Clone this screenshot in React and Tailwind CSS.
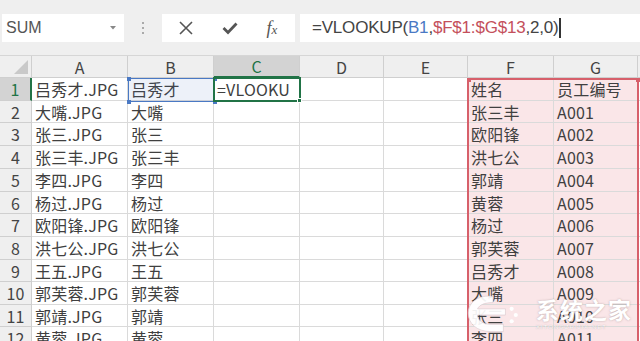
import React from "react";

const cols = ["A", "B", "C", "D", "E", "F", "G"];
const colW = ["w-[96px]", "w-[86px]", "w-[86px]", "w-[84px]", "w-[84px]", "w-[86px]", "w-[84px]"];
const rowH = ["h-[23px]", "h-[22px]", "h-[23px]", "h-[23px]", "h-[23px]", "h-[22px]", "h-[23px]", "h-[23px]", "h-[22px]", "h-[23px]", "h-[22px]", "h-[23px]"];

const A = ["吕秀才.JPG", "大嘴.JPG", "张三.JPG", "张三丰.JPG", "李四.JPG", "杨过.JPG", "欧阳锋.JPG", "洪七公.JPG", "王五.JPG", "郭芙蓉.JPG", "郭靖.JPG", "黄蓉.JPG"];
const B = ["吕秀才", "大嘴", "张三", "张三丰", "李四", "杨过", "欧阳锋", "洪七公", "王五", "郭芙蓉", "郭靖", "黄蓉"];
const F = ["姓名", "张三丰", "欧阳锋", "洪七公", "郭靖", "黄蓉", "杨过", "郭芙蓉", "吕秀才", "大嘴", "张三", "李四"];
const G = ["员工编号", "A001", "A002", "A003", "A004", "A005", "A006", "A007", "A008", "A009", "A010", "A011"];

const font = "font-['Noto_Sans_CJK_SC','Noto_Sans',sans-serif]";

function Cell({ w, h, text, pink }) {
  return (
    <div
      className={`${w} ${h} shrink-0 border-r border-b border-[#dadada] ${pink ? "bg-[#fae6e8]" : "bg-white"} flex items-center pl-[3px] text-[16px] leading-none text-[#404040] whitespace-nowrap overflow-hidden tracking-[0.2px]`}
    >
      {text}
    </div>
  );
}

export default function App() {
  return (
    <div className={`w-[640px] h-[341px] overflow-hidden bg-white relative ${font}`}>
      {/* Formula bar */}
      <div className="h-[56px] bg-[#efefef] flex items-start pt-[14px] pl-[2px] border-b border-[#d6d6d6]">
        <div className="w-[122px] h-[28px] bg-white flex items-center pl-[4px] pr-[8px] justify-between">
          <span className="text-[16px] text-[#555] font-['Liberation_Sans',sans-serif]">SUM</span>
          <svg width="6" height="4" viewBox="0 0 6 4"><path d="M0 0 L6 0 L3 3.5 Z" fill="#888" /></svg>
        </div>
        <div className="w-[38px] h-[28px] flex flex-col items-center justify-center gap-[3px]">
          <div className="w-[2px] h-[2px] bg-[#aaa]" />
          <div className="w-[2px] h-[2px] bg-[#aaa]" />
          <div className="w-[2px] h-[2px] bg-[#aaa]" />
        </div>
        <div className="w-[133px] h-[28px] bg-white flex items-center">
          <div className="w-[46px] flex justify-center pl-[2px]">
            <svg width="14" height="14" viewBox="0 0 14 14"><path d="M1 1 L13 13 M13 1 L1 13" stroke="#555" strokeWidth="1.6" /></svg>
          </div>
          <div className="w-[44px] flex justify-center">
            <svg width="16" height="14" viewBox="0 0 16 14"><path d="M1.5 7 L6 11.5 L14.5 2.5" stroke="#555" strokeWidth="2.8" fill="none" /></svg>
          </div>
          <div className="w-[40px] flex justify-center">
            <span className="font-['Liberation_Serif',serif] italic text-[18px] text-[#555] leading-none">f<span className="text-[13px]">x</span></span>
          </div>
        </div>
        <div className="w-[5px]" />
        <div className="flex-1 h-[28px] bg-white flex items-center pl-[12px] text-[17px] text-[#444] font-['Liberation_Sans',sans-serif] whitespace-nowrap tracking-[-0.2px]">
          <span>=VLOOKUP(</span>
          <span className="text-[#4a79c4]">B1</span>
          <span>,</span>
          <span className="text-[#c4505c]">$F$1:$G$13</span>
          <span>,2,0)</span>
          <span className="w-[1.5px] h-[20px] bg-[#333] ml-[1px]" />
        </div>
      </div>

      {/* Grid */}
      <div className="relative">
        <div className="flex h-[22px]">
          <div className="w-[32px] shrink-0 bg-[#efefef] border-r border-b border-[#cfcfcf] flex items-end justify-end p-[3px]">
            <svg width="14" height="14" viewBox="0 0 14 14"><path d="M14 0 L14 14 L0 14 Z" fill="#c9c9c9" /></svg>
          </div>
          {cols.map((c, i) => (
            <div
              key={c}
              className={`${colW[i]} shrink-0 border-r border-[#cfcfcf] flex items-center justify-center text-[16px] leading-none ${c === "C" ? "bg-[#d3d3d3] text-[#217346] border-b-2 border-b-[#217346]" : "bg-[#efefef] text-[#444] border-b border-b-[#cfcfcf]"}`}
            >
              {c}
            </div>
          ))}
          <div className="flex-1 bg-[#efefef] border-b border-[#cfcfcf]" />
        </div>
        {rowH.map((h, r) => (
          <div key={r} className="flex">
            <div
              className={`w-[32px] ${h} shrink-0 border-r border-b border-[#cfcfcf] flex items-center justify-center text-[16px] leading-none ${r === 0 ? "bg-[#d3d3d3] text-[#217346] border-r-2 border-r-[#217346]" : "bg-[#efefef] text-[#444]"}`}
            >
              {r + 1}
            </div>
            <Cell w={colW[0]} h={h} text={A[r]} />
            <Cell w={colW[1]} h={h} text={B[r]} />
            <Cell w={colW[2]} h={h} text={r === 0 ? "=VLOOKU" : ""} />
            <Cell w={colW[3]} h={h} text="" />
            <Cell w={colW[4]} h={h} text="" />
            <Cell w={colW[5]} h={h} text={F[r]} pink />
            <Cell w={colW[6]} h={h} text={G[r]} pink />
            <div className={`flex-1 ${h} border-b border-[#dadada] bg-white`} />
          </div>
        ))}

        {/* B1 reference highlight */}
        <div className="absolute left-[128px] top-[22px] w-[87px] h-[24px] bg-[#4a79c4]/10 border-[1.5px] border-[#4a79c4] pointer-events-none">
          <div className="absolute -left-[2.5px] -top-[2.5px] w-[4px] h-[4px] bg-[#4a79c4]" />
          <div className="absolute -right-[2.5px] -top-[2.5px] w-[4px] h-[4px] bg-[#4a79c4]" />
          <div className="absolute -left-[2.5px] -bottom-[2.5px] w-[4px] h-[4px] bg-[#4a79c4]" />
          <div className="absolute -right-[2.5px] -bottom-[2.5px] w-[4px] h-[4px] bg-[#4a79c4]" />
        </div>
        {/* C1 active cell */}
        <div className="absolute left-[213px] top-[21px] w-[88px] h-[25px] border-2 border-[#217346] pointer-events-none">
          <div className="absolute -right-[3px] -bottom-[3px] w-[5px] h-[5px] bg-[#217346] border border-white" />
        </div>
        {/* F1:G13 range */}
        <div className="absolute left-[467px] top-[22px] w-[172px] h-[300px] border-2 border-[#d7606b] pointer-events-none">
          <div className="absolute -left-[2.5px] -top-[2.5px] w-[4px] h-[4px] bg-[#d7606b]" />
          <div className="absolute -right-[2.5px] -top-[2.5px] w-[4px] h-[4px] bg-[#d7606b]" />
        </div>
      </div>

      {/* watermark */}
      <div className="absolute left-[462px] top-[290px] flex items-center gap-[14px] pointer-events-none">
        <svg width="60" height="48" viewBox="0 0 58 46">
          <path d="M30 6 C16 4 6 12 6 22 C6 32 14 40 28 40 L40 40 L40 33 L28 33 C20 33 15 29 15 24 L42 24 L42 18 L15 18 C17 14 22 12 30 12 Z" fill="#ffffff" fillOpacity="0.92" stroke="#d8c8cc" strokeWidth="0.6" />
          <circle cx="48" cy="18" r="2" fill="#fff" />
          <circle cx="52" cy="24" r="2" fill="#fff" />
          <circle cx="48" cy="30" r="2" fill="#fff" />
        </svg>
        <div className="flex flex-col items-start">
          <span className="text-[23px] leading-none text-white font-bold tracking-[1px] [text-shadow:0_0_2px_rgba(120,100,100,0.5)]">系统之家</span>
          <span className="text-[6px] leading-none text-white mt-[3px] tracking-[1px] font-['Liberation_Sans',sans-serif] [text-shadow:0_0_1px_rgba(120,100,100,0.6)]">XITONGZHIJIA.NET</span>
        </div>
      </div>
    </div>
  );
}
